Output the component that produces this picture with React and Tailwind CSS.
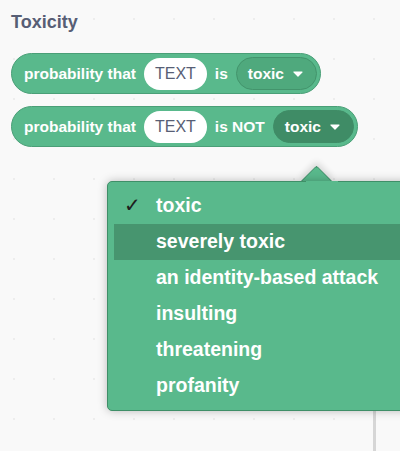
import { useState } from "react";

const OPTIONS = [
  "toxic",
  "severely toxic",
  "an identity-based attack",
  "insulting",
  "threatening",
  "profanity",
];

function Caret() {
  return (
    <svg width="10" height="6" viewBox="0 0 10 6" className="ml-[9px]">
      <path d="M1 1 L9 1 L5 5.2 Z" fill="#fff" stroke="#fff" strokeWidth="1.2" strokeLinejoin="round" />
    </svg>
  );
}

function TextPill() {
  return (
    <div className="h-[32px] px-[11px] rounded-full bg-white flex items-center text-[#575e75] text-[16px] font-normal">
      TEXT
    </div>
  );
}

function Dropdown({ active }) {
  return (
    <div
      className={`h-[33px] pl-[11px] pr-[13px] rounded-full flex items-center border ${
        active ? "bg-[#3f8c66] border-[#3f8c66]" : "bg-[#4fa97d] border-[#43946c]"
      }`}
    >
      toxic
      <Caret />
    </div>
  );
}

function Block({ not }) {
  return (
    <div className="self-start h-[41px] pl-[12px] pr-[3px] rounded-full bg-[#59b98c] border border-[#4a9f77] flex items-center gap-[8px] text-white text-[15.5px] font-bold">
      <span>probability that</span>
      <TextPill />
      <span>{not ? "is NOT" : "is"}</span>
      <Dropdown active={not} />
    </div>
  );
}

export default function App() {
  const [selected] = useState(0);
  const [hover] = useState(1);

  return (
    <div
      className="relative w-[400px] h-[451px] overflow-hidden bg-[#f9f9f9] bg-[radial-gradient(circle,#ededed_1px,transparent_1.2px)] bg-[size:40px_40px] bg-[position:-6px_-1px]"
      style={{ fontFamily: '"Liberation Sans", Arial, sans-serif' }}
    >
      <div className="pl-[11px] pt-[11px] flex flex-col">
        <h2 className="text-[18px] leading-[22px] font-bold text-[#575e75]">Toxicity</h2>
        <div className="mt-[20px] flex flex-col gap-[12px]">
          <Block />
          <Block not />
        </div>
      </div>

      {/* workspace scrollbar edge */}
      <div className="absolute left-[373px] top-[400px] bottom-0 w-[3px] bg-[#d6d6d6]" />

      {/* dropdown menu */}
      <div className="absolute left-[305px] top-[170px] w-[23px] h-[23px] rotate-45 rounded-tl-[3px] bg-[#59b98c] border-t border-l border-[#3f8f68] shadow-[-3px_-3px_6px_rgba(0,0,0,0.12)]" />
      <div className="absolute left-[107px] top-[181px] w-[330px] h-[230px] rounded-[5px] bg-[#59b98c] border border-[#3f8f68] shadow-[0_0_10px_rgba(0,0,0,0.25)] py-[6px] pl-[6px]">
        <div className="absolute left-[198px] -top-[1px] w-[32px] h-[2px] bg-[#59b98c]" />
        {OPTIONS.map((o, i) => (
          <div
            key={o}
            className={`relative h-[36px] flex items-center pl-[42px] text-white text-[19.5px] font-bold ${
              i === hover ? "bg-[#47956f]" : ""
            }`}
          >
            {i === selected && (
              <span
                className="absolute left-[10px] top-[6px] text-[20px] leading-[22px] text-[#1e1e1e]"
                style={{ fontFamily: '"DejaVu Sans", sans-serif' }}
              >
                ✓
              </span>
            )}
            {o}
          </div>
        ))}
      </div>
    </div>
  );
}
